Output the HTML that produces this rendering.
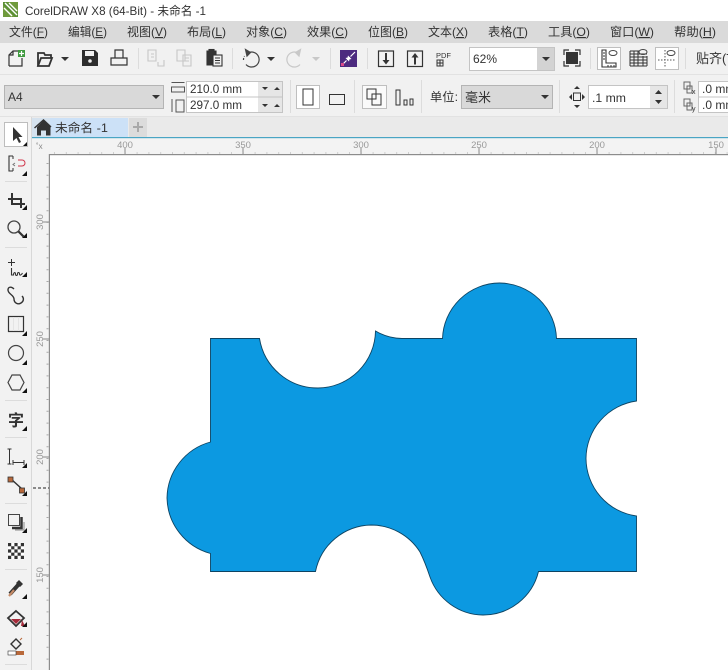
<!DOCTYPE html>
<html><head><meta charset="utf-8"><style>
html,body{margin:0;padding:0;background:#fff;width:728px;height:670px;overflow:hidden}
svg{display:block;filter:blur(.3px)}
text{font-family:"Liberation Sans","Noto Sans CJK SC",sans-serif;fill:#333}
.m{font-size:12px}
.s{font-size:12px}
.r{font-size:9.500px;fill:#999}
</style></head><body>
<svg width="728" height="670" viewBox="0 0 728 670" xmlns="http://www.w3.org/2000/svg">
<!-- backgrounds -->
<rect width="728" height="670" fill="#fff"/>
<rect y="21" width="728" height="22" fill="#dadada"/>
<rect y="43" width="728" height="31" fill="#f1f1f1"/>
<rect y="74" width="728" height="43" fill="#f1f1f1"/>
<rect y="74" width="728" height="1" fill="#e2e2e2"/>
<rect y="116" width="728" height="1" fill="#e2e2e2"/>
<rect y="117" width="728" height="21" fill="#eaeaea"/>
<rect y="117" width="32" height="553" fill="#f2f2f2"/>
<rect x="31" y="117" width="1" height="553" fill="#d8d8d8"/>
<rect x="32" y="138" width="696" height="17" fill="#f3f3f3"/>
<rect x="32" y="138" width="17" height="532" fill="#f3f3f3"/>
<rect x="49" y="155" width="679" height="515" fill="#fff"/>
<rect x="49" y="154" width="679" height="1.200" fill="#8c8c8c"/>
<rect x="48.800" y="154" width="1.200" height="516" fill="#8c8c8c"/>

<!-- title -->
<g>
<rect x="3" y="2" width="15" height="15" fill="#6f9a3c"/>
<path d="M3 2h4l11 11v4h-3L3 5z" fill="#4d8b2f" opacity=".55"/>
<path d="M5 3 L17 15 M9 3 L17 11 M4 8 L12 16" stroke="#fff" stroke-width="1.400" fill="none"/>
</g>
<text x="25" y="15" class="m" textLength="181" lengthAdjust="spacingAndGlyphs">CorelDRAW X8 (64-Bit) - 未命名 -1</text>

<!-- menu -->
<g>
<text x="9" y="36" class="m" textLength="39" lengthAdjust="spacingAndGlyphs">文件(<tspan text-decoration="underline">F</tspan>)</text>
<text x="68" y="36" class="m" textLength="39" lengthAdjust="spacingAndGlyphs">编辑(<tspan text-decoration="underline">E</tspan>)</text>
<text x="127" y="36" class="m" textLength="40" lengthAdjust="spacingAndGlyphs">视图(<tspan text-decoration="underline">V</tspan>)</text>
<text x="187" y="36" class="m" textLength="39" lengthAdjust="spacingAndGlyphs">布局(<tspan text-decoration="underline">L</tspan>)</text>
<text x="246" y="36" class="m" textLength="41" lengthAdjust="spacingAndGlyphs">对象(<tspan text-decoration="underline">C</tspan>)</text>
<text x="307" y="36" class="m" textLength="41" lengthAdjust="spacingAndGlyphs">效果(<tspan text-decoration="underline">C</tspan>)</text>
<text x="368" y="36" class="m" textLength="40" lengthAdjust="spacingAndGlyphs">位图(<tspan text-decoration="underline">B</tspan>)</text>
<text x="428" y="36" class="m" textLength="40" lengthAdjust="spacingAndGlyphs">文本(<tspan text-decoration="underline">X</tspan>)</text>
<text x="488" y="36" class="m" textLength="40" lengthAdjust="spacingAndGlyphs">表格(<tspan text-decoration="underline">T</tspan>)</text>
<text x="548" y="36" class="m" textLength="42" lengthAdjust="spacingAndGlyphs">工具(<tspan text-decoration="underline">O</tspan>)</text>
<text x="610" y="36" class="m" textLength="44" lengthAdjust="spacingAndGlyphs">窗口(<tspan text-decoration="underline">W</tspan>)</text>
<text x="674" y="36" class="m" textLength="42" lengthAdjust="spacingAndGlyphs">帮助(<tspan text-decoration="underline">H</tspan>)</text>
</g>

<!-- toolbar 1 -->
<g fill="none" stroke="#333" stroke-width="1.200">
<path d="M9 66V55l4-4h5M9 66h13V58"/>
<path d="M9 55h4v-4"/>
<rect x="18" y="50" width="7" height="7" fill="#3f9a3f" stroke="none"/>
<path d="M21.500 51v5M19 53.500h5" stroke="#fff"/>
<path d="M38 66V53h6l1 2h6v3" stroke-width="1.800"/>
<path d="M38 66h11l3-8H41l-3 8z" stroke-width="1.800"/>
<path d="M61 57h8l-4 4z" fill="#333" stroke="none"/>
<path d="M82 50h13l3 3v13H82z" fill="#2d2d2d" stroke="none"/>
<rect x="85" y="51" width="9" height="5" fill="#f1f1f1" stroke="none"/>
<circle cx="90" cy="61" r="1.800" fill="#f1f1f1" stroke="none"/>
<path d="M115 58v-8h8v8M111 58h16v7h-16z"/>
</g>
<g fill="none" stroke="#c6c6c6" stroke-width="1.100">
<path d="M148 50h8v11h-8zM151 54h3M151 57h3"/>
<path d="M158 62v4h6v-6"/>
<path d="M177 50h8v11h-8zM183 55h8v11h-8z"/>
<path d="M185 58h4M185 61h4"/>
</g>
<g fill="none" stroke="#333" stroke-width="1.100">
<path d="M207 51h9v14h-9z" fill="#333"/>
<rect x="209" y="49.500" width="5" height="3" fill="#333"/>
<rect x="213" y="55" width="9" height="11" fill="#f1f1f1"/>
<path d="M215 58h5M215 60.500h5M215 63h5" stroke-width="1"/>
</g>
<g fill="none" stroke="#444" stroke-width="1.200">
<path d="M249 52.500a7.500 7.500 0 1 1-3 12"/>
<path d="M245.500 49.500l5 3-3.500 3.500z" fill="#444"/>
<path d="M243.500 60a7 7 0 0 1 1-4" stroke-dasharray="2 1.500"/>
<path d="M267 57h8l-4 4z" fill="#333" stroke="none"/>
</g>
<g fill="none" stroke="#c8c8c8" stroke-width="1.200">
<path d="M297 52.500a7.500 7.500 0 1 0 3 12"/>
<path d="M300.500 49.500l-5 3 3.500 3.500z" fill="#c8c8c8"/>
<path d="M312 57h8l-4 4z" fill="#c8c8c8" stroke="none"/>
</g>
<rect x="340" y="50" width="17" height="17" fill="#4c2a7f"/>
<path d="M342 65l4.500-4.500M355 52l-4.500 4.500" stroke="#fff" stroke-width="1.200"/>
<path d="M350 57l-1 4.500-3.500-3.500zM347 60l1-4.500 3.500 3.500z" fill="#fff"/>
<rect x="341" y="63" width="3" height="3" fill="#d94b8a"/>
<g fill="none" stroke="#333" stroke-width="1.200">
<rect x="378.500" y="51" width="15" height="15.500"/>
<path d="M386 53v8" stroke-width="2"/><path d="M382.500 60h7l-3.500 4.500z" fill="#333" stroke="none"/>
<rect x="407.500" y="51" width="15" height="15.500"/>
<path d="M415 64.500v-8" stroke-width="2"/><path d="M411.500 57.500h7l-3.500-4.500z" fill="#333" stroke="none"/>
</g>
<text x="436" y="58" style="font-size:7.500px">PDF</text>
<path d="M437 60h6v6h-6zM437 63h6M440 60v6" stroke="#333" fill="none" stroke-width="1"/>
<rect x="469.500" y="47.500" width="85" height="23" fill="#fff" stroke="#c4c4c4"/>
<rect x="537" y="48" width="17" height="22" fill="#d3d3d3"/>
<text x="473" y="63" class="s">62%</text>
<path d="M542 57h8l-4 4z" fill="#333"/>
<path d="M564 55v-5h5M575 50h5v5M580 61v5h-5M569 66h-5v-5" fill="none" stroke="#333" stroke-width="1.200"/>
<rect x="566" y="52" width="12" height="12" fill="#333"/>
<rect x="597.500" y="47.500" width="23" height="22" fill="#fff" stroke="#bfbfbf"/>
<path d="M602 50v17h14v-4h-10V50z" fill="none" stroke="#333" stroke-width="1.100"/>
<path d="M608 65v2M611 65v2M614 65v2M603 53h2M603 56h2M603 59h2" stroke="#333"/>
<ellipse cx="613" cy="53" rx="4" ry="2.500" fill="none" stroke="#444"/>
<path d="M630 51h9M630 54h17M630 57h17M630 60h17M630 63h17M630 66h17M630 51v15M634 51v15M638 51v15M643 56v10M647 56v10" stroke="#333" fill="none"/>
<ellipse cx="643" cy="52" rx="4" ry="2.500" fill="none" stroke="#444"/>
<rect x="655.500" y="47.500" width="23" height="22" fill="#fff" stroke="#bfbfbf"/>
<path d="M665 50v17M658 60h17" stroke="#555" stroke-dasharray="1.500 1.500"/>
<ellipse cx="671" cy="53" rx="4" ry="2.500" fill="none" stroke="#444"/>
<text x="696" y="63" style="font-size:13px">贴齐(T)</text>
<g fill="#dcdcdc">
<rect x="138" y="48" width="1" height="21"/><rect x="232" y="48" width="1" height="21"/>
<rect x="330" y="48" width="1" height="21"/><rect x="367" y="48" width="1" height="21"/>
<rect x="590" y="48" width="1" height="21"/><rect x="685" y="48" width="1" height="21"/>
<rect x="290" y="80" width="1" height="33"/><rect x="354" y="80" width="1" height="33"/>
<rect x="421" y="80" width="1" height="33"/><rect x="559" y="80" width="1" height="33"/>
<rect x="674" y="80" width="1" height="33"/>
</g>

<!-- toolbar 2 -->
<rect x="4.500" y="85.500" width="159" height="23" fill="#d9d9d9" stroke="#b4b4b4"/>
<text x="8" y="101" class="s">A4</text>
<path d="M152 95h8l-4 4z" fill="#333"/>
<path d="M171.500 82.500h13M171.500 92v-5h13v5z" fill="none" stroke="#555"/>
<path d="M172 99v13M184 100h-8v12h8z" fill="none" stroke="#555"/>
<rect x="186.500" y="81.500" width="96" height="31" fill="#fff" stroke="#c4c4c4"/>
<rect x="258" y="82" width="24" height="30" fill="#e6e6e6"/>
<path d="M187 97h95" stroke="#c4c4c4"/>
<text x="190" y="93" class="s" textLength="52" lengthAdjust="spacingAndGlyphs">210.0 mm</text>
<text x="190" y="109" class="s" textLength="52" lengthAdjust="spacingAndGlyphs">297.0 mm</text>
<path d="M262 87h6l-3 3zM274 90h6l-3-3zM262 104h6l-3 3zM274 107h6l-3-3z" fill="#333"/>
<rect x="296.500" y="85.500" width="23" height="23" fill="#fff" stroke="#bfbfbf"/>
<rect x="303" y="89" width="10" height="16" fill="none" stroke="#333"/>
<rect x="329.500" y="94.500" width="15" height="10" fill="none" stroke="#333"/>
<rect x="362.500" y="85.500" width="24" height="23" fill="#fafafa" stroke="#bfbfbf"/>
<path d="M367 89h9v10h-9zM372 94h9v11h-9z" fill="none" stroke="#333"/>
<path d="M396 90h4v15h-4zM404 100h3v5h-3zM410 99h3v6h-3z" fill="none" stroke="#333"/>
<text x="430" y="101" class="s" textLength="28" lengthAdjust="spacingAndGlyphs">单位:</text>
<rect x="461.500" y="85.500" width="91" height="23" fill="#d9d9d9" stroke="#b4b4b4"/>
<text x="465" y="102" style="font-size:13px">毫米</text>
<path d="M541 95h8l-4 4z" fill="#333"/>
<rect x="573.500" y="93" width="7" height="7.500" fill="none" stroke="#333"/>
<path d="M577 86l3 3h-6zM577 108l3-3h-6zM569 97l3-3v6zM585 97l-3-3v6z" fill="#333"/>
<rect x="588.500" y="85.500" width="79" height="23" fill="#fff" stroke="#c4c4c4"/>
<rect x="650" y="86" width="17" height="22" fill="#e6e6e6"/>
<text x="592" y="102" class="s" textLength="34" lengthAdjust="spacingAndGlyphs">.1 mm</text>
<path d="M655 94h7l-3.500-4zM655 100h7l-3.500 4z" fill="#333"/>
<path d="M684 82h6v7h-6zM687 86h5v7h-5zM684 99h6v7h-6zM687 103h5v7h-5z" fill="none" stroke="#666"/>
<text x="692" y="94" style="font-size:7px">x</text><text x="692" y="111" style="font-size:7px">y</text>
<rect x="698.500" y="81.500" width="40" height="31" fill="#fff" stroke="#c4c4c4"/>
<path d="M699 97h30" stroke="#c4c4c4"/>
<text x="702" y="93" class="s">.0 mm</text>
<text x="702" y="109" class="s">.0 mm</text>

<!-- tabs -->
<rect x="32" y="118" width="18" height="19" fill="#d5e2ee"/>
<rect x="50" y="118" width="78" height="19" fill="#cce1f7"/>
<rect x="129" y="118" width="18" height="19" fill="#dcdcdc"/>
<path d="M43.500 120.500l7 6.500v8.500h-4.500v-5h-5v5H37V127z" fill="#333"/>
<path d="M34.500 128l9-8 7.500 7" fill="none" stroke="#333" stroke-width="1.500"/>
<text x="55" y="132" class="s" textLength="53" lengthAdjust="spacingAndGlyphs">未命名 -1</text>
<path d="M138 122v10M133 127h10" stroke="#a9a9a9" stroke-width="2"/>
<rect x="32" y="137" width="696" height="1.200" fill="#49a5c4"/>

<!-- ruler -->
<text x="36" y="149" style="font-size:8px;fill:#888">˚x</text>
<g class="r" text-anchor="middle">
<text class="r" x="125" y="148">400</text><text class="r" x="243" y="148">350</text><text class="r" x="361" y="148">300</text><text class="r" x="479" y="148">250</text><text class="r" x="597" y="148">200</text><text class="r" x="716" y="148">150</text>
<text class="r" transform="translate(43 222) rotate(-90)">300</text>
<text class="r" transform="translate(43 339) rotate(-90)">250</text>
<text class="r" transform="translate(43 457) rotate(-90)">200</text>
<text class="r" transform="translate(43 575) rotate(-90)">150</text>
</g>
<path d="M125 148v6M243 148v6M361 148v6M479 148v6M597 148v6M716 148v6M43 222h6M43 339h6M43 457h6M43 575h6" stroke="#8a8a8a"/>
<path stroke="#a8a8a8" stroke-dasharray="1 10.800" d="M54 153H728"/>
<path stroke="#a8a8a8" stroke-width="2" stroke-dasharray="1 10.800" d="M47.500 163V670"/>
<path d="M33 488h16" stroke="#222" stroke-dasharray="3 2"/>

<!-- puzzle -->
<path d="M210.500 338.500H259.500A59 59 0 0 0 318 388A58 58 0 0 0 375.500 331C383 335.500 392 338.500 402 338.500H442.500A57.500 57.500 0 0 1 499.500 283A57.500 57.500 0 0 1 556.500 338.500H636.500V401A58.500 58.500 0 0 0 586 458.500A58.500 58.500 0 0 0 636.500 516V571.500H538.500A57 57 0 0 1 483 615A57 57 0 0 1 430 577C427 568 424 560 420 552A58 58 0 0 0 371 525A58 58 0 0 0 315.500 571.500H210.500V553.500A59 59 0 0 1 167 498A59 59 0 0 1 210.500 442Z" fill="#0c99e1" stroke="#0d4463" stroke-width=".9"/>

<!-- toolbox -->
<rect x="4.500" y="122.500" width="23" height="24" fill="#fff" stroke="#bdbdbd"/>
<path d="M13 127v14l3.500-3 2.500 5 2-1-2.500-5h4z" fill="#333"/>
<g fill="#dcdcdc">
<rect x="5" y="181" width="22" height="1"/><rect x="5" y="247" width="22" height="1"/>
<rect x="5" y="400" width="22" height="1"/><rect x="5" y="437" width="22" height="1"/>
<rect x="5" y="503" width="22" height="1"/><rect x="5" y="569" width="22" height="1"/>
<rect x="5" y="664" width="22" height="1"/>
</g>
<!-- shape tool -->
<path d="M13 156H9v15h4" fill="none" stroke="#333" stroke-width="1.100"/>
<path d="M13 156v3M13 171v-3" stroke="#333"/>
<path d="M15 163l-2 1.500 2 1.500" fill="none" stroke="#777"/>
<path d="M18 160h4a2.500 2.500 0 0 1 0 6h-4" fill="none" stroke="#d0354a"/>
<!-- crop -->
<path d="M8 199h13v9M12 193v11h13" fill="none" stroke="#333" stroke-width="2"/>
<!-- zoom -->
<circle cx="14" cy="227" r="6" fill="none" stroke="#444" stroke-width="1.300"/>
<path d="M18.500 231.500l5 5" stroke="#333" stroke-width="2.200"/>
<!-- freehand -->
<path d="M11.500 259v7M8 262.500h7" stroke="#333"/>
<path d="M11.500 268v7h2c0-3 2-3 2-1s2 2 2 0 2-2 2 0 2 1 3-1" fill="none" stroke="#333" stroke-width="1.100"/>
<!-- artistic -->
<path d="M14 289c-3-3-6-2-6 1 0 4 6 5 6 9 0 4 4 6 7 4 3-2 3-5 1-7" fill="none" stroke="#333" stroke-width="1.400"/>
<!-- rect -->
<rect x="8.500" y="316.500" width="15" height="15" fill="none" stroke="#333" stroke-width="1.200"/>
<path d="M13.500 317v14M18.500 317v14" stroke="#e4e4e4"/>
<!-- ellipse -->
<circle cx="16" cy="353" r="7.500" fill="none" stroke="#444" stroke-width="1.200"/>
<!-- polygon -->
<path d="M12 375h8l4 7.500-4 7.500h-8l-4-7.500z" fill="none" stroke="#444" stroke-width="1.200"/>
<!-- text tool -->
<text x="8" y="426" style="font-size:16px;font-weight:bold">字</text>
<!-- dimension -->
<path d="M9.500 449v15M7.500 449h4M7.500 464h4M13 462.500h11M13 460v5M24 460v5" fill="none" stroke="#333"/>
<!-- connector -->
<path d="M11 479l11 10" stroke="#333" stroke-width="1.500"/>
<rect x="8" y="477" width="5" height="5" fill="#b8683a" stroke="#333" stroke-width=".8"/>
<rect x="19.500" y="488" width="5" height="5" fill="#b8683a" stroke="#333" stroke-width=".8"/>
<!-- shadow -->
<rect x="8.500" y="514.500" width="11" height="11" fill="none" stroke="#444"/>
<path d="M21.500 517v11H12" fill="none" stroke="#333" stroke-width="2.500"/>
<path d="M24 522v8H15" fill="none" stroke="#888" stroke-width="1"/>
<!-- transparency -->
<rect x="8" y="543" width="16" height="16" fill="#fff"/>
<path d="M8 543h3.200v3.200H8zM14.400 543h3.200v3.200h-3.200zM20.800 543H24v3.200h-3.200zM11.200 546.200h3.200v3.200h-3.200zM17.600 546.200h3.200v3.200h-3.200zM8 549.400h3.200v3.200H8zM14.400 549.400h3.200v3.200h-3.200zM20.800 549.400H24v3.200h-3.200zM11.200 552.600h3.200v3.200h-3.200zM17.600 552.600h3.200v3.200h-3.200zM8 555.800h3.200V559H8zM14.400 555.800h3.200V559h-3.200zM20.800 555.800H24V559h-3.200z" fill="#333"/>
<!-- eyedropper -->
<path d="M10 594l9-10" stroke="#333" stroke-width="4"/>
<path d="M9 596l5-6" stroke="#c58a66" stroke-width="2.200"/>
<path d="M19 580l4 4-3 3-4-4z" fill="#333"/>
<!-- fill -->
<path d="M16 611l8 7-8 8-8-8z" fill="none" stroke="#333" stroke-width="1.800"/>
<path d="M11 619h10l-5 5z" fill="#a52a3a"/>
<path d="M22 620l3 6h-4z" fill="#a52a3a"/>
<!-- outline -->
<path d="M16 639l5 5-5 5-5-5z" fill="none" stroke="#333" stroke-width="1.400"/>
<path d="M20 640l2-2" stroke="#b8683a"/>
<rect x="8" y="651" width="16" height="4" fill="#b8683a"/>
<rect x="8" y="651" width="8" height="4" fill="#fff" stroke="#333" stroke-width=".6"/>
<!-- tool flyout triangles -->
<g fill="#111">
<path d="M27 142v4h-4z"/><path d="M27 171v5h-5z"/><path d="M27 205v5h-5z"/><path d="M27 233v5h-5z"/><path d="M27 272v5h-5z"/>
<path d="M27 331v5h-5z"/><path d="M27 360v5h-5z"/><path d="M27 388v5h-5z"/><path d="M27 426v5h-5z"/><path d="M27 463v5h-5z"/><path d="M27 491v5h-5z"/>
<path d="M27 528v5h-5z"/><path d="M27 594v5h-5z"/><path d="M27 622v5h-5z"/>
</g>
</svg>
</body></html>
